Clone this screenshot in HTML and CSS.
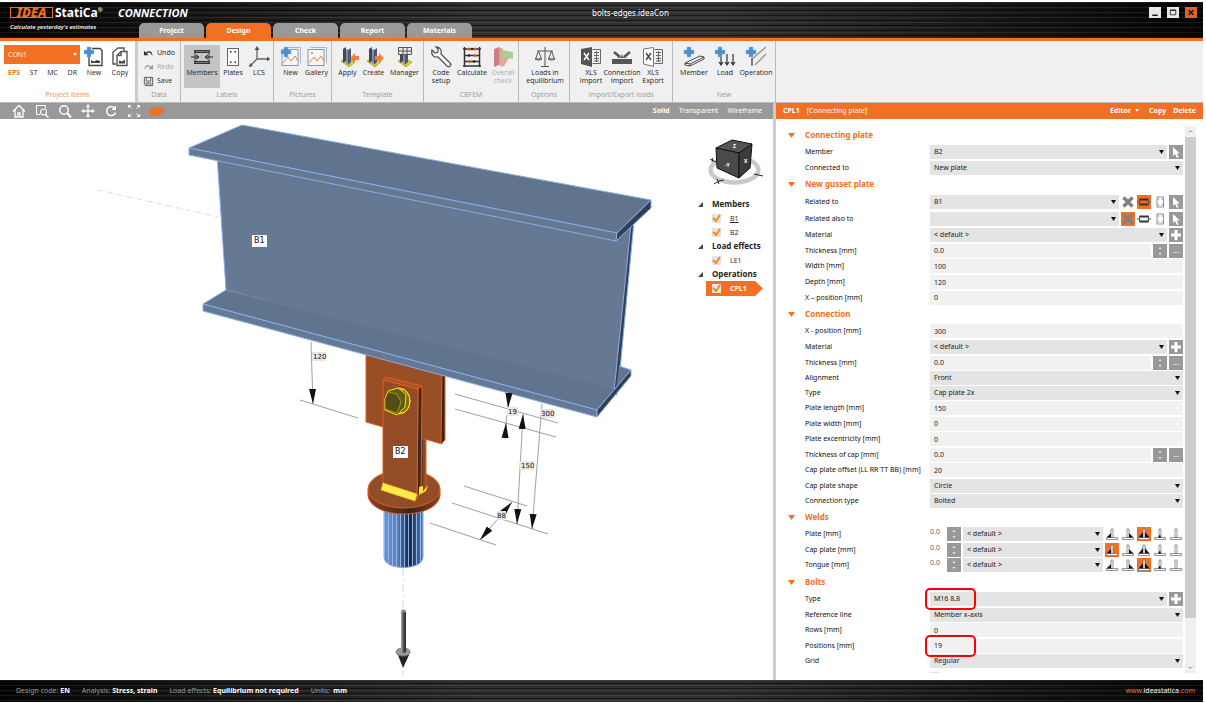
FILE: index.html
```
<!DOCTYPE html>
<html lang="en">

<head>
    <meta charset="UTF-8" />
    <meta name="viewport" content="width=device-width, initial-scale=1.0" />
    <title>IDEA StatiCa Connection - bolts-edges.ideaCon</title>
    <link rel="stylesheet" href="styles.css">
</head>

<body>

    <!-- shared icons -->
    <svg class="sprite" aria-hidden="true">
        <symbol id="plus" viewBox="0 0 14 14"><path d="M5.500 2h3v3.500h3.500v3H8.500V12h-3V8.500H2v-3h3.500z" fill="#fff" /></symbol>
        <symbol id="pick" viewBox="0 0 14 14"><path d="M4 2v9l2-2 2 4 1.500-.8L7.800 8.500h3z" fill="#fff" /></symbol>
        <symbol id="spin" viewBox="0 0 14 14"><path d="M5.500 5L7 3l1.500 2zM5.500 9L7 11l1.500-2z" fill="#eee" /></symbol>
        <symbol id="cross" viewBox="0 0 14 14"><path d="M2.500 2.500l9 9M11.500 2.500l-9 9" stroke="#808080" stroke-width="3.500" /></symbol>
        <symbol id="beam" viewBox="0 0 14 14"><path d="M2.500 4.500h9M2.500 9.500h9" stroke="#333" stroke-width="1.800" /><path d="M0 7h3.500M10.500 7H14M2.500 4v6M11.500 4v6" stroke="#555" /></symbol>
        <symbol id="plate" viewBox="0 0 14 14"><rect x="4" y="2" width="6.500" height="10" fill="#fff" stroke="#777" stroke-width=".8" /><path d="M5.500 3.500v1M9 3.500v1M5.500 9.500v1M9 9.500v1" stroke="#555" /></symbol>
        <symbol id="weld-base" viewBox="0 0 14 14"><path d="M1.500 10.500h11v2h-11zM6 2h2v8.500H6z" fill="#fff" stroke="#777" stroke-width=".8" /></symbol>
        <symbol id="weld-left" viewBox="0 0 14 14"><use href="#weld-base" /><path d="M6 6v4.500H1.500z" fill="#111" /></symbol>
        <symbol id="weld-right" viewBox="0 0 14 14"><use href="#weld-base" /><path d="M8 6v4.500h4.500z" fill="#111" /></symbol>
        <symbol id="weld-both" viewBox="0 0 14 14"><use href="#weld-base" /><path d="M6 5v5.500H1.500zM8 5v5.500h4.500z" fill="#111" /></symbol>
        <symbol id="weld-butt" viewBox="0 0 14 14"><use href="#weld-base" /><path d="M5 10.500l2-3 1 3z" fill="#111" /></symbol>
        <symbol id="blueplus" viewBox="0 0 22 22"><path d="M4 1h4v3h3v4H8v3H4V8H1V4h3z" fill="#4a90d0" stroke="#8bb8e4" stroke-width=".5" /></symbol>
        <symbol id="column" viewBox="0 0 22 22">
            <path d="M4 15l6-3 8 4-6 5z" fill="#d8d02c" stroke="#8d8718" stroke-width=".6" />
            <path d="M6 3l3-2v14l-3 2z" fill="#40465c" /><path d="M9 4l2-1v14l-2 1z" fill="#8289a8" /><path d="M11 4l3-2v14l-3 3z" fill="#50566f" />
        </symbol>
        <symbol id="picture" viewBox="0 0 22 22">
            <path d="M4.500 1.500h16v16" fill="none" stroke="#aab6c4" />
            <rect x="2" y="3.500" width="16" height="16" fill="#f6f6f6" stroke="#7f9ab5" />
            <path d="M3 17l5-6 3 4 4-5 3 5" fill="none" stroke="#e8853c" />
        </symbol>
    </svg>

    <header class="titlebar">
        <div class="titlebar-row">
            <div class="brand"><b class="brand-idea">IDEA</b><b class="brand-name">StatiCa<sup>®</sup></b><b class="brand-product">CONNECTION</b></div>
            <div class="file-name">bolts-edges.ideaCon</div>
            <div class="window-buttons">
                <button aria-label="Minimize"><svg viewBox="0 0 12 12"><path d="M3 9h6" stroke="#111" stroke-width="1.500" /></svg></button>
                <button aria-label="Maximize"><svg viewBox="0 0 12 12"><path d="M3 3.500h6v5H3z" fill="none" stroke="#333" /><path d="M3 3.500h6" stroke="#333" stroke-width="1.500" /></svg></button>
                <button class="close" aria-label="Close"><svg viewBox="0 0 12 12"><path d="M3.500 3.500l5 5M8.500 3.500l-5 5" stroke="#111" stroke-width="1.600" /></svg></button>
            </div>
        </div>
        <div class="titlebar-row">
            <div class="slogan">Calculate yesterday's estimates</div>
            <nav class="tabs">
                <button>Project</button>
                <button class="active">Design</button>
                <button>Check</button>
                <button>Report</button>
                <button>Materials</button>
            </nav>
        </div>
    </header>

    <div class="ribbon">
        <section class="group project">
            <div class="tools">
                <div class="project-pick">
                    <select aria-label="Project item"><option>CON1</option></select>
                    <div class="modes"><button class="on">EPS</button><button>ST</button><button>MC</button><button>DR</button></div>
                </div>
                <button class="tool"><svg viewBox="0 0 22 22"><path d="M9 2.500h8l2 2v15H6V11" fill="#fff" stroke="#444" stroke-width="1.400" /><path d="M8 17v-3l3 1.500 3-1.500 3 1v2z" fill="#444" /><use href="#blueplus" width="22" height="22" /></svg>New</button>
                <button class="tool"><svg viewBox="0 0 22 22"><path d="M7 18H4V6l5-4h6v4" fill="none" stroke="#555" stroke-width="1.400" /><path d="M8 9.500l4-4h6v14H8zM12 5.500v4H8" fill="#fff" stroke="#555" stroke-width="1.400" /><path d="M10 17.500v-3l3 1 3-2v4z" fill="#444" /></svg>Copy</button>
            </div>
            <h2>Project items</h2>
        </section>
        <section class="group">
            <div class="lines">
                <button><svg viewBox="0 0 12 12"><path d="M1 3v5h5L4 6c3-2 5-1 6 3 1-5-3-7-7-4z" fill="#333" /></svg>Undo</button>
                <button class="dim"><svg viewBox="0 0 12 12"><path d="M11 3v5H6l2-2C5 4 3 5 2 9 1 4 5 2 9 5z" fill="#999" /></svg>Redo</button>
                <button><svg viewBox="0 0 12 12"><path d="M1.500 1.500h9v9h-8l-1-1z" fill="none" stroke="#555" /><path d="M3.500 1.500v4h5v-4M3.500 10.500v-3h5v3M5.500 8v2" fill="none" stroke="#555" /></svg>Save</button>
            </div>
            <h2>Data</h2>
        </section>
        <section class="group">
            <div class="tools">
                <button class="tool wide pressed"><svg viewBox="0 0 22 22"><path d="M3 5.500h16M3 16.500h16" stroke="#333" stroke-width="3" /><path d="M3 5.500h16M3 16.500h16" stroke="#999" stroke-width=".7" /><path d="M4 5v12M18 5v12" stroke="#444" /><path d="M0 11h7M15 11h7M5 9l3 2-3 2M17 9l-3 2 3 2" fill="none" stroke="#222" /></svg>Members</button>
                <button class="tool"><svg viewBox="0 0 22 22"><rect x="5.500" y="2.500" width="11" height="17" fill="#fff" stroke="#666" /><path d="M8 5h1.500v1.500H8zM12.500 5H14v1.500h-1.500zM8 15.500h1.500V17H8zM12.500 15.500H14V17h-1.500z" fill="#222" /></svg>Plates</button>
                <button class="tool"><svg viewBox="0 0 22 22"><path d="M9 13V2M9 13h12M9 13l-7 7" fill="none" stroke="#666" stroke-width="1.300" /><path d="M6.500 4L9 0l2.500 4zM19 10.500l3.500 2.500-3.500 2.500zM1 21l1-4 3 3z" fill="#555" /></svg>LCS</button>
            </div>
            <h2>Labels</h2>
        </section>
        <section class="group">
            <div class="tools">
                <button class="tool"><svg viewBox="0 0 22 22"><use href="#picture" width="22" height="22" /><use href="#blueplus" width="22" height="22" /></svg>New</button>
                <button class="tool"><svg viewBox="0 0 22 22"><use href="#picture" width="22" height="22" /><circle cx="6" cy="7" r="1" fill="#e8853c" /></svg>Gallery</button>
            </div>
            <h2>Pictures</h2>
        </section>
        <section class="group">
            <div class="tools">
                <button class="tool"><svg viewBox="0 0 22 22"><use href="#column" width="22" height="22" /><path d="M22 10h-4V7l-5 5 5 5v-3h4z" fill="#f0803c" /></svg>Apply</button>
                <button class="tool"><svg viewBox="0 0 22 22"><use href="#column" width="22" height="22" /><path d="M12 10h4V7l5 5-5 5v-3h-4z" fill="#f0803c" /></svg>Create</button>
                <button class="tool wide"><svg viewBox="0 0 22 22"><use href="#column" width="22" height="22" /><path d="M4.500 1.500h13v7h-13zM4.500 5h13M9 1.500v7M13 1.500v7" fill="#e8eaf2" stroke="#555" /></svg>Manager</button>
            </div>
            <h2>Template</h2>
        </section>
        <section class="group">
            <div class="tools">
                <button class="tool"><svg viewBox="0 0 22 22"><path d="M2 4l3 3 3-1V3L6 1c4 0 6 3 5 7l9 9c2 2-1 5-3 3l-9-9C3 12 1 8 2 4z" fill="#fafafa" stroke="#555" stroke-width="1.300" /></svg>Code<br>setup</button>
                <button class="tool wide"><svg viewBox="0 0 22 22"><path d="M3.500 1v20M18.500 1v20M2 3h18M3 9.500h16M3 15.500h16M2 20h18" stroke="#333" stroke-width="1.500" /><g fill="#e4570e"><circle cx="8" cy="3" r="1.500" /><circle cx="14" cy="3" r="1.500" /><circle cx="14" cy="9.500" r="1.500" /><circle cx="9" cy="15.500" r="1.500" /></g><g fill="#222"><circle cx="11" cy="3" r="1.300" /><circle cx="8" cy="9.500" r="1.300" /><circle cx="13" cy="15.500" r="1.300" /></g></svg>Calculate</button>
                <button class="tool dim"><svg viewBox="0 0 22 22"><path d="M2 3l5-2v18l-5 2z" fill="#cd7f83" /><path d="M7 1l4 2v17l-4-1z" fill="#df9d9d" /><path d="M9 4l12 2v7L9 11z" fill="#a9ce96" /><path d="M9 11l8 1-5 8-3 1z" fill="#e2a999" /></svg>Overall<br>check</button>
            </div>
            <h2>CBFEM</h2>
        </section>
        <section class="group">
            <div class="tools">
                <button class="tool wide"><svg viewBox="0 0 22 22"><path d="M11 1v19M7 20.500h8M3 5h16M4.500 5L1.500 13h6zM17.500 5l-3 8h6z" fill="none" stroke="#555" /><path d="M1 13h7q-3.500 3-7 0zM14 13h7q-3.500 3-7 0z" fill="#aaa" stroke="#555" stroke-width=".6" /></svg>Loads in<br>equilibrium</button>
            </div>
            <h2>Options</h2>
        </section>
        <section class="group">
            <div class="tools">
                <button class="tool"><svg viewBox="0 0 22 22"><path d="M12.500 3.500h8v14h-8M14 6.500h5M14 9.500h5M14 12.500h5M14 15h5M16.500 5v11" fill="none" stroke="#666" /><path d="M1 3l11-2v20L1 18z" fill="#555" /><path d="M4 7l5 7M9 7l-5 7" stroke="#fff" stroke-width="1.400" /></svg>XLS<br>Import</button>
                <button class="tool wide"><svg viewBox="0 0 22 22"><path d="M1 13h20v5H1z" fill="#555" /><path d="M3 6l6 5M19 6l-6 5" stroke="#555" stroke-width="2.500" /><path d="M5 12l5-1V8l1 3 1-3v3l5 1z" fill="#555" /></svg>Connection<br>Import</button>
                <button class="tool"><svg viewBox="0 0 22 22"><path d="M12.500 3.500h8v14h-8M14 6.500h5M14 9.500h5M14 12.500h5M14 15h5M16.500 5v11" fill="none" stroke="#666" /><path d="M1.500 3l10-1.500v19L1.500 18z" fill="#fff" stroke="#777" /><path d="M4 7l5 7M9 7l-5 7" stroke="#444" stroke-width="1.400" /></svg>XLS<br>Export</button>
            </div>
            <h2>Import/Export loads</h2>
        </section>
        <section class="group">
            <div class="tools">
                <button class="tool wide"><svg viewBox="0 0 22 22"><path d="M2 17l15-7 4 1v2L7 20l-5-1zM2 17l5 1 14-7M7 18v2" fill="#fff" stroke="#444" /><use href="#blueplus" width="22" height="22" /></svg>Member</button>
                <button class="tool"><svg viewBox="0 0 22 22"><path d="M7 9v10M13 8v11M19 8v11M5 16l2 3 2-3M11 16l2 3 2-3M17 16l2 3 2-3" fill="none" stroke="#333" stroke-width="1.200" /><use href="#blueplus" width="22" height="22" /></svg>Load</button>
                <button class="tool wide"><svg viewBox="0 0 22 22"><path d="M21 1L7 13v6M21 8L10 19" fill="none" stroke="#999" stroke-width="1.500" /><path d="M7 12v8" stroke="#444" /><use href="#blueplus" width="22" height="22" /></svg>Operation</button>
            </div>
            <h2>New</h2>
        </section>
    </div>

    <main class="workspace">
        <section class="view">
            <div class="view-bar">
                <div class="view-tools">
                    <button aria-label="Home"><svg viewBox="0 0 14 14"><path d="M1 7.500L7 1.500l6 6M3 6v7h3V9h2v4h3V6" fill="none" stroke="#fff" stroke-width="1.300" /></svg></button>
                    <button aria-label="Zoom window"><svg viewBox="0 0 14 14"><path d="M5 10.500H1.500v-9h9V4" fill="none" stroke="#fff" /><circle cx="8.500" cy="8" r="3" fill="none" stroke="#fff" stroke-width="1.200" /><path d="M10.500 10.500l3 3" stroke="#fff" stroke-width="1.500" /></svg></button>
                    <button aria-label="Zoom"><svg viewBox="0 0 14 14"><circle cx="6" cy="6" r="4.300" fill="none" stroke="#fff" stroke-width="1.500" /><path d="M9 9l4 4.500" stroke="#fff" stroke-width="2" /></svg></button>
                    <button aria-label="Pan"><svg viewBox="0 0 14 14"><path d="M7 2v10M2 7h10" stroke="#fff" stroke-width="1.300" /><path d="M5 3L7 0l2 3zM5 11l2 3 2-3zM3 5L0 7l3 2zM11 5l3 2-3 2z" fill="#fff" /></svg></button>
                    <button aria-label="Rotate"><svg viewBox="0 0 14 14"><path d="M10.500 4A4.500 4.500 0 1 0 11.500 8.500" fill="none" stroke="#fff" stroke-width="1.500" /><path d="M12 1.500v4.500H7.500z" fill="#fff" /></svg></button>
                    <button aria-label="Fit"><svg viewBox="0 0 14 14"><path d="M1.500 4V1.500H4M10 1.500h2.500V4M12.500 10v2.500H10M4 12.500H1.500V10M2 2l2.500 2.500M12 2L9.500 4.500M12 12L9.500 9.500M2 12l2.500-2.500" fill="none" stroke="#fff" /></svg></button>
                    <button aria-label="Perspective"><svg viewBox="0 0 14 14"><path d="M0 6l4-3 10 1v3l-4 4-7 1-3-2z" fill="#f36f21" /></svg></button>
                </div>
                <div class="view-modes"><button class="on">Solid</button><button>Transparent</button><button>Wireframe</button></div>
            </div>

            <div class="scene">
                <svg class="model" viewBox="0 119 773 560" preserveAspectRatio="xMinYMin meet">
                    <defs>
                        <linearGradient id="pipe" x1="0" x2="1"><stop offset="0" stop-color="#7394c8" /><stop offset=".35" stop-color="#5f7fae" /><stop offset=".65" stop-color="#1b2433" /><stop offset="1" stop-color="#5c7cab" /></linearGradient>
                        <linearGradient id="rod" x1="0" x2="1"><stop offset="0" stop-color="#aaa" /><stop offset=".5" stop-color="#555" /><stop offset="1" stop-color="#222" /></linearGradient>
                        <linearGradient id="rim" x1="0" x2="1"><stop offset="0" stop-color="#8a4522" /><stop offset=".6" stop-color="#3c2216" /><stop offset="1" stop-color="#8a4522" /></linearGradient>
                        <pattern id="ribs" width="4" height="10" patternUnits="userSpaceOnUse"><path d="M.5 0v10" stroke="#8db5f4" /></pattern>
                        <marker id="tip" viewBox="0 0 15 8" refX="15" refY="4" markerWidth="15" markerHeight="8" markerUnits="userSpaceOnUse" orient="auto-start-reverse"><path d="M0 .5L15 4 0 7.500z" fill="#111" /></marker>
                    </defs>
                    <path d="M98 190l120 27" stroke="#a9c4e4" stroke-width=".6" stroke-dasharray="5 2 1 2" />

                    <!-- pipe under the cap plate -->
                    <path d="M384 500h39v57c0 14-39 14-39 0z" fill="url(#pipe)" />
                    <path d="M384 500h39v57c0 14-39 14-39 0z" fill="url(#ribs)" stroke="#7ba7ea" />
                    <path d="M368 489v7c4 24 68 24 72 0v-7z" fill="url(#rim)" stroke="#e55c1c" />
                    <ellipse cx="404" cy="489" rx="36" ry="19" fill="#914d27" stroke="#e55c1c" />

                    <!-- gusset and tongue plates -->
                    <g stroke="#e55c1c">
                        <path d="M421 430h5v60l-7 5z" fill="#8e4a25" />
                        <path d="M422 436v52" stroke="#39221a" />
                        <path d="M366 352l76 18v74l-76-22z" fill="#984f26" />
                        <path d="M442 370h3v70l-4 4z" fill="#3a241a" />
                        <path d="M383 380l3-3 36 9-4 3z" fill="#a85528" />
                        <path d="M418 389l4-3-1 106-4 5z" fill="#42261b" />
                        <path d="M383 380l35 9-1 110-34-14z" fill="#934c26" />
                    </g>
                    <path d="M383 483l34 11-2 7-34-11z" fill="#ffe94a" stroke="#f8c718" stroke-width=".6" />
                    <path d="M419 487l4-1v6l-4 3zM421 494l7-9-2 6z" fill="#ffe032" />
                    <ellipse cx="399" cy="401" rx="11" ry="13" fill="#7f6f12" stroke="#f5df0a" />
                    <ellipse cx="401" cy="401" rx="9" ry="12" fill="none" stroke="#f5df0a" />
                    <path d="M388 391l10-3 8 6-1 13-8 8-12-5v-11z" fill="#645b13" stroke="#f5df0a" />
                    <path d="M385 399l3-7 9 2 4 8-4 11-12-4z" fill="#514c18" stroke="#d9c70d" stroke-width=".6" />

                    <!-- beam B1 -->
                    <g stroke="#84aeea">
                        <path d="M217 155l416 60-16 180-391-105z" fill="#657993" />
                        <path d="M631 224l3-3-16 170-4 1z" fill="#334055" />
                        <path d="M226 290l-23 14 394 106 34-40-12-4-3 24z" fill="#60758d" stroke="none" />
                        <path d="M226 290l-23 14 394 106 34-40-12-4" fill="none" />
                        <path d="M203 304l394 106v7L203 311z" fill="#657993" />
                        <path d="M597 410l34-40v6l-34 41z" fill="#333f50" />
                        <path d="M189 148l53-23 409 75-34 33z" fill="#60758d" />
                        <path d="M189 148l428 85-1 8-427-86z" fill="#657993" />
                        <path d="M617 233l34-33v8l-35 33z" fill="#333f50" />
                    </g>

                    <!-- dimensions -->
                    <g fill="none" stroke="#777" stroke-width=".7">
                        <path d="M300 400l58 18M455 394l103 29M455 409l101 28M464 486l63 20M452 503l96 31M430 523l66 22" />
                        <path d="M311 342l2 62" marker-end="url(#tip)" />
                        <path d="M509 393l-1 15" marker-end="url(#tip)" />
                        <path d="M508 408l-2 15" />
                        <path d="M505 439l1-16" marker-end="url(#tip)" />
                        <path d="M542 404l-10 125" marker-end="url(#tip)" />
                        <path d="M523 414l-6 110" marker-start="url(#tip)" marker-end="url(#tip)" />
                        <path d="M512 502l-32 38" marker-start="url(#tip)" marker-end="url(#tip)" />
                    </g>
                    <g fill="#e6e6e6">
                        <rect x="312" y="352" width="14" height="9" /><rect x="507" y="407" width="11" height="9" /><rect x="541" y="409" width="14" height="9" />
                        <rect x="520" y="461" width="14" height="9" /><rect x="497" y="511" width="9" height="9" />
                    </g>
                    <g class="dims">
                        <text x="313" y="359">120</text><text x="508" y="414">19</text><text x="541" y="416">300</text><text x="521" y="468">150</text><text x="497" y="518">88</text>
                    </g>
                    <path d="M252 235h15v12h-15zM393 446h15v12h-15z" fill="#fff" />
                    <g class="names"><text x="254" y="243">B1</text><text x="395" y="454">B2</text></g>

                    <!-- load arrow -->
                    <path d="M403 568v42M403 670v6" stroke="#b5cbe4" stroke-width=".7" stroke-dasharray="8 3 2 3" />
                    <path d="M398 655h11l-6 13z" fill="#222" />
                    <ellipse cx="403" cy="652" rx="7" ry="4" fill="#999" stroke="#777" />
                    <path d="M401 612h5v40q-2.500 2-5 0z" fill="url(#rod)" />
                    <ellipse cx="403.500" cy="611" rx="2.500" ry="1.500" fill="#888" />
                </svg>

                <aside class="overlay">
                    <svg class="cube" viewBox="697 133 76 60">
                        <ellipse cx="734.500" cy="170" rx="24" ry="12.500" fill="none" stroke="#c9c9c9" stroke-width="4.500" />
                        <path d="M716 148l16-8 20 4-13 9z" fill="#555" stroke="#111" />
                        <path d="M716 148l23 5v25l-22-10z" fill="#4a4a4a" stroke="#111" />
                        <path d="M739 153l13-9-2 24-11 10z" fill="#3c3c3c" stroke="#111" />
                        <path d="M710 159l6 3M713 158l-1 4M714 184l5-3 5-1M717 179l2 5M754 174l9 2" stroke="#222" fill="none" />
                        <g class="cube-text"><text x="725" y="167">-Y</text><text x="744" y="163">X</text><text x="733" y="148">Z</text></g>
                    </svg>
                    <ul class="tree">
                        <li class="branch">Members</li>
                        <li><label><input type="checkbox" checked><u>B1</u></label></li>
                        <li><label><input type="checkbox" checked>B2</label></li>
                        <li class="branch">Load effects</li>
                        <li><label><input type="checkbox" checked>LE1</label></li>
                        <li class="branch">Operations</li>
                        <li class="selected"><label><input type="checkbox" checked>CPL1</label></li>
                    </ul>
                </aside>
            </div>
        </section>

        <section class="panel">
            <div class="panel-bar">
                <b>CPL1</b><span>[Connecting plate]</span>
                <div class="panel-actions"><button class="editor">Editor</button><button>Copy</button><button>Delete</button></div>
            </div>
            <div class="panel-body">
                <form class="props">
                    <h3>Connecting plate</h3>
                    <div class="row tall"><label for="member">Member</label><div class="field"><select id="member"><option>B2</option></select><button type="button" class="sq" aria-label="Pick"><svg><use href="#pick" /></svg></button></div></div>
                    <div class="row"><label for="connected">Connected to</label><div class="field"><select id="connected"><option>New plate</option></select></div></div>

                    <h3>New gusset plate</h3>
                    <div class="row high"><label for="related">Related to</label><div class="field"><select id="related"><option>B1</option></select><div class="picks"><button type="button" aria-label="None"><svg><use href="#cross" /></svg></button><button type="button" class="on" aria-label="Member"><svg><use href="#beam" /></svg></button><button type="button" aria-label="Plate"><svg><use href="#plate" /></svg></button></div><button type="button" class="sq" aria-label="Pick"><svg><use href="#pick" /></svg></button></div></div>
                    <div class="row high"><label for="related2">Related also to</label><div class="field"><select id="related2"><option></option></select><div class="picks"><button type="button" class="on" aria-label="None"><svg><use href="#cross" /></svg></button><button type="button" aria-label="Member"><svg><use href="#beam" /></svg></button><button type="button" aria-label="Plate"><svg><use href="#plate" /></svg></button></div><button type="button" class="sq" aria-label="Pick"><svg><use href="#pick" /></svg></button></div></div>
                    <div class="row tall"><label for="material">Material</label><div class="field"><select id="material"><option>&lt; default &gt;</option></select><button type="button" class="sq" aria-label="Add"><svg><use href="#plus" /></svg></button></div></div>
                    <div class="row"><label for="thickness">Thickness [mm]</label><div class="field"><input id="thickness" value="0.0"><button type="button" class="sq" aria-label="Step"><svg><use href="#spin" /></svg></button><button type="button" class="sq">...</button></div></div>
                    <div class="row tall"><label for="width">Width [mm]</label><div class="field"><input id="width" value="100"></div></div>
                    <div class="row tall"><label for="depth">Depth [mm]</label><div class="field"><input id="depth" value="120"></div></div>
                    <div class="row"><label for="xpos">X – position [mm]</label><div class="field"><input id="xpos" value="0"></div></div>

                    <h3>Connection</h3>
                    <div class="row tall"><label for="xpos2">X - position [mm]</label><div class="field"><input id="xpos2" value="300"></div></div>
                    <div class="row tall"><label for="material2">Material</label><div class="field"><select id="material2"><option>&lt; default &gt;</option></select><button type="button" class="sq" aria-label="Add"><svg><use href="#plus" /></svg></button></div></div>
                    <div class="row"><label for="thickness2">Thickness [mm]</label><div class="field"><input id="thickness2" value="0.0"><button type="button" class="sq" aria-label="Step"><svg><use href="#spin" /></svg></button><button type="button" class="sq">...</button></div></div>
                    <div class="row"><label for="alignment">Alignment</label><div class="field"><select id="alignment"><option>Front</option></select></div></div>
                    <div class="row"><label for="type">Type</label><div class="field"><select id="type"><option>Cap plate 2x</option></select></div></div>
                    <div class="row tall"><label for="plength">Plate length [mm]</label><div class="field"><input id="plength" value="150"></div></div>
                    <div class="row"><label for="pwidth">Plate width [mm]</label><div class="field"><input id="pwidth" value="0"></div></div>
                    <div class="row tall"><label for="pexc">Plate excentricity [mm]</label><div class="field"><input id="pexc" value="0"></div></div>
                    <div class="row"><label for="cap">Thickness of cap [mm]</label><div class="field"><input id="cap" value="0.0"><button type="button" class="sq" aria-label="Step"><svg><use href="#spin" /></svg></button><button type="button" class="sq">...</button></div></div>
                    <div class="row tall"><label for="offset">Cap plate offset (LL RR TT BB) [mm]</label><div class="field"><input id="offset" value="20"></div></div>
                    <div class="row"><label for="shape">Cap plate shape</label><div class="field"><select id="shape"><option>Circle</option></select></div></div>
                    <div class="row"><label for="contype">Connection type</label><div class="field"><select id="contype"><option>Bolted</option></select></div></div>

                    <h3>Welds</h3>
                    <div class="row tall"><label for="w1">Plate [mm]</label><div class="field weld"><span>0.0</span><button type="button" class="sq" aria-label="Step"><svg><use href="#spin" /></svg></button><select id="w1"><option>&lt; default &gt;</option></select><div class="picks"><button type="button" aria-label="Left"><svg><use href="#weld-left" /></svg></button><button type="button" aria-label="Right"><svg><use href="#weld-right" /></svg></button><button type="button" class="on" aria-label="Both"><svg><use href="#weld-both" /></svg></button><button type="button" aria-label="Butt"><svg><use href="#weld-butt" /></svg></button><button type="button" aria-label="None"><svg><use href="#weld-base" /></svg></button></div></div></div>
                    <div class="row"><label for="w2">Cap plate [mm]</label><div class="field weld"><span>0.0</span><button type="button" class="sq" aria-label="Step"><svg><use href="#spin" /></svg></button><select id="w2"><option>&lt; default &gt;</option></select><div class="picks"><button type="button" class="on" aria-label="Left"><svg><use href="#weld-left" /></svg></button><button type="button" aria-label="Right"><svg><use href="#weld-right" /></svg></button><button type="button" aria-label="Both"><svg><use href="#weld-both" /></svg></button><button type="button" aria-label="Butt"><svg><use href="#weld-butt" /></svg></button><button type="button" aria-label="None"><svg><use href="#weld-base" /></svg></button></div></div></div>
                    <div class="row tall"><label for="w3">Tongue [mm]</label><div class="field weld"><span>0.0</span><button type="button" class="sq" aria-label="Step"><svg><use href="#spin" /></svg></button><select id="w3"><option>&lt; default &gt;</option></select><div class="picks"><button type="button" aria-label="Left"><svg><use href="#weld-left" /></svg></button><button type="button" aria-label="Right"><svg><use href="#weld-right" /></svg></button><button type="button" class="on" aria-label="Both"><svg><use href="#weld-both" /></svg></button><button type="button" aria-label="Butt"><svg><use href="#weld-butt" /></svg></button><button type="button" aria-label="None"><svg><use href="#weld-base" /></svg></button></div></div></div>

                    <h3>Bolts</h3>
                    <div class="row tall"><label for="bolt">Type</label><div class="field marked"><select id="bolt"><option>M16 8.8</option></select><button type="button" class="sq" aria-label="Add"><svg><use href="#plus" /></svg></button></div></div>
                    <div class="row"><label for="refline">Reference line</label><div class="field"><select id="refline"><option>Member x-axis</option></select></div></div>
                    <div class="row tall"><label for="rows">Rows [mm]</label><div class="field"><input id="rows" value="0"></div></div>
                    <div class="row"><label for="positions">Positions [mm]</label><div class="field marked"><input id="positions" value="19"></div></div>
                    <div class="row"><label for="grid">Grid</label><div class="field"><select id="grid"><option>Regular</option></select></div></div>
                    <div class="row tall"><label for="shear">Shear plane in thread</label><div class="field"><input type="checkbox" id="shear" checked></div></div>
                </form>
                <div class="scrollbar"><svg viewBox="0 0 11 11"><path d="M3.500 6.500l2-2 2 2" fill="none" stroke="#888" /></svg><div class="thumb"></div><svg viewBox="0 0 11 11"><path d="M3.500 4.500l2 2 2-2" fill="none" stroke="#888" /></svg></div>
            </div>
        </section>
    </main>

    <footer class="status">
        <span>Design code: <b>EN</b></span>
        <span>Analysis: <b>Stress, strain</b></span>
        <span>Load effects: <b>Equilibrium not required</b></span>
        <span>Units: &nbsp;<b>mm</b></span>
        <a href="#"><i>www.</i>ideastatica<i>.com</i></a>
    </footer>

</body>

</html>
```
FILE: styles.css
```
*,
*::after {
    box-sizing: border-box;
}

body {
    margin: 0;
    padding: 2px 3px 1px 0;
    height: 100vh;
    display: flex;
    flex-direction: column;
    font-family: "Noto Sans", "Open Sans", sans-serif;
    font-size: 7px;
    line-height: 10px;
    color: #222;
    background: #fff;
}

button,
select,
input {
    font: inherit;
    color: inherit;
    margin: 0;
    padding: 0;
    border: 0;
    border-radius: 0;
    background: none;
}

.sprite {
    display: none;
}

/* title bar */

.titlebar,
.status {
    background:
        repeating-linear-gradient(rgba(255, 255, 255, 0.07) 0 1px, transparent 1px 3px, rgba(0, 0, 0, 0.5) 3px 4px, transparent 4px 5px),
        linear-gradient(90deg, #050505, #303030 40%, #303030 60%, #050505);
    color: #fff;
}

.titlebar {
    height: 39px;
    border-bottom: 3px solid #f36f21;
}

.titlebar-row {
    display: flex;
    height: 21px;
    align-items: center;
}

.titlebar-row + .titlebar-row {
    height: 15px;
    align-items: stretch;
}

.brand {
    display: flex;
    align-items: center;
    width: 190px;
    padding-left: 10px;
    white-space: nowrap;
}

.brand-idea {
    width: 43px;
    border: 1px solid #f36f21;
    color: #f36f21;
    font-size: 13px;
    line-height: 9px;
    font-weight: 800;
    font-style: italic;
    text-align: center;
}

.brand-name {
    width: 65px;
    padding-left: 2px;
    font-size: 12px;
}

.brand-name sup {
    font-size: 6px;
    line-height: 1px;
}

.brand-product {
    font-family: "Open Sans", sans-serif;
    font-size: 11px;
    font-style: italic;
}

.file-name {
    flex: 1;
    padding-right: 78px;
    text-align: center;
    font-size: 8px;
}

.window-buttons {
    display: flex;
    gap: 6px;
    padding-right: 6px;
}

.window-buttons button {
    width: 12px;
    height: 11px;
    background: #e8e8e8;
}

.window-buttons .close {
    background: #e0641f;
}

.window-buttons svg {
    display: block;
    width: 12px;
    height: 11px;
}

.slogan {
    width: 139px;
    padding-left: 10px;
    line-height: 8px;
    font-family: "Open Sans", sans-serif;
    font-size: 6px;
    font-style: italic;
    font-weight: 600;
}

.tabs {
    display: flex;
    gap: 2px;
}

.tabs button {
    width: 65px;
    border-radius: 5px 5px 0 0;
    background: #999;
    color: #fff;
    font-weight: 700;
}

.tabs .active {
    background: #f36f21;
}

/* ribbon */

.ribbon {
    display: grid;
    grid-template-columns: 138px 43px 93px 58px 92px 95px 51px 103px 103px;
    height: 62px;
    background: #f0f0f0;
    border-bottom: 1px solid #bbb;
    font-family: "Open Sans", sans-serif;
}

.group {
    display: flex;
    flex-direction: column;
    justify-content: space-between;
    padding: 4px 0 2px;
    border-right: 1px solid #bbb;
}

.group h2 {
    margin: 0;
    font-size: 7px;
    font-weight: 400;
    line-height: 10px;
    text-align: center;
    color: #999;
}

.project {
    background: #fff;
    border-right: 3px solid #ccc;
}

.project h2 {
    color: #f5a878;
    font-weight: 600;
}

.tools {
    display: flex;
    justify-content: center;
    padding-left: 2px;
}

.tool {
    display: flex;
    flex-direction: column;
    align-items: center;
    width: 26px;
    height: 43px;
    padding-top: 1px;
    line-height: 8px;
}

.tool svg {
    flex: none;
    width: 22px;
    height: 22px;
    margin-bottom: 1px;
}

.wide {
    width: 36px;
}

.pressed {
    background: #c4c4c4;
}

.dim {
    color: #aaa;
}

.project-pick {
    width: 77px;
}

.project-pick select {
    appearance: none;
    width: 76px;
    height: 19px;
    padding-left: 4px;
    color: #fff;
    background: #f36f21 url("data:image/svg+xml,%3Csvg xmlns='http://www.w3.org/2000/svg' width='5' height='4'%3E%3Cpath d='M0 0h4L2 3z' fill='white'/%3E%3C/svg%3E") no-repeat right 2px center;
}

.modes {
    display: flex;
    justify-content: space-between;
    padding: 4px 4px 0;
}

.modes .on {
    color: #f36f21;
    font-weight: 700;
}

.lines {
    display: flex;
    flex-direction: column;
    padding: 1px 0 0 5px;
}

.lines button {
    display: flex;
    align-items: center;
    gap: 3px;
    height: 14px;
}

.lines svg {
    width: 11px;
    height: 11px;
}

/* workspace */

.workspace {
    flex: 1;
    min-height: 0;
    display: grid;
    grid-template-columns: minmax(0, 1fr) 430px;
}

.view {
    display: flex;
    flex-direction: column;
}

.view-bar {
    display: flex;
    justify-content: space-between;
    height: 16px;
    padding: 0 11px 0 7px;
    background: #999;
    color: #fff;
}

.view-tools,
.view-modes {
    display: flex;
    align-items: center;
}

.view-tools button {
    width: 23px;
    height: 14px;
}

.view-tools svg {
    width: 14px;
    height: 14px;
}

.view-modes {
    gap: 9px;
}

.view-modes .on {
    font-weight: 700;
}

.scene {
    flex: 1;
    min-height: 0;
    position: relative;
}

.model {
    display: block;
    width: 100%;
    height: 100%;
}

.model text {
    font-family: "DejaVu Sans", sans-serif;
    fill: #111;
}

.dims {
    font-size: 7px;
}

.names {
    font-size: 8px;
}

.overlay {
    position: absolute;
    top: 14px;
    right: 0;
    width: 76px;
}

.cube {
    display: block;
    width: 76px;
    height: 60px;
}

.cube-text {
    font-size: 5px;
    font-weight: 700;
    fill: #fff;
}

.tree {
    list-style: none;
    margin: 0;
    padding: 4px 0 0;
    line-height: 14px;
    font-family: "Open Sans", sans-serif;
    font-size: 8px;
}

.tree li {
    padding-left: 15px;
    height: 14px;
}

.tree .branch {
    font-weight: 700;
    background: url("data:image/svg+xml,%3Csvg xmlns='http://www.w3.org/2000/svg' width='5' height='5'%3E%3Cpath d='M5 0v5H0z' fill='%23444'/%3E%3C/svg%3E") no-repeat 1px center;
}

.tree label {
    display: flex;
    align-items: center;
    gap: 9px;
    font-size: 7px;
    line-height: 15px;
}

input[type="checkbox"] {
    appearance: none;
    flex: none;
    width: 9px;
    height: 9px;
    background: #e4e4e4 url("data:image/svg+xml,%3Csvg xmlns='http://www.w3.org/2000/svg' width='9' height='9'%3E%3Cpath d='M1 4l3 3 4-6' fill='none' stroke='%23f78b1e' stroke-width='2'/%3E%3C/svg%3E");
}

.tree .selected {
    width: 57px;
    height: 15px;
    margin-left: 9px;
    padding-left: 6px;
    color: #fff;
    background: #f36f21;
    clip-path: polygon(0 0, 86% 0, 100% 50%, 86% 100%, 0 100%);
}

.selected label {
    font-weight: 700;
}

/* properties */

.panel {
    display: flex;
    flex-direction: column;
    min-height: 0;
    border-left: 3px solid #ccc;
}

.panel-bar {
    display: flex;
    align-items: center;
    flex: none;
    gap: 7px;
    height: 16px;
    padding: 0 7px;
    background: #f36f21;
    color: #fff;
}

.panel-actions {
    display: flex;
    gap: 7px;
    margin-left: auto;
    font-weight: 700;
}

.editor {
    padding-right: 11px;
    background: url("data:image/svg+xml,%3Csvg xmlns='http://www.w3.org/2000/svg' width='5' height='4'%3E%3Cpath d='M0 0h4L2 3z' fill='white'/%3E%3C/svg%3E") no-repeat right 2px center;
}

.panel-body {
    display: flex;
    flex: 1;
    min-height: 0;
    gap: 2px;
    padding: 7px 7px 7px 11px;
}

.props {
    flex: 1;
    min-width: 0;
    overflow: hidden;
}

.props h3 {
    margin: 0;
    padding-left: 18px;
    font-size: 8px;
    line-height: 18px;
    color: #f36f21;
    background: url("data:image/svg+xml,%3Csvg xmlns='http://www.w3.org/2000/svg' width='7' height='5'%3E%3Cpath d='M0 0h7L3.500 5z' fill='%23f36f21'/%3E%3C/svg%3E") no-repeat 1px center;
}

.row {
    display: grid;
    grid-template-columns: 125px minmax(0, 1fr);
    height: 15px;
    padding-left: 18px;
    align-items: center;
}

.row.tall {
    height: 16px;
}

.row.high {
    height: 17px;
}

.row > label {
    white-space: nowrap;
    color: #111;
}

.field {
    position: relative;
    display: flex;
    align-items: center;
    gap: 2px;
    height: 14px;
}

.field select,
.field input:not([type="checkbox"]) {
    flex: 1;
    min-width: 0;
    height: 14px;
    padding: 0 4px;
    background: #f1f1f1;
}

.field select {
    appearance: none;
    background: #e4e4e4 url("data:image/svg+xml,%3Csvg xmlns='http://www.w3.org/2000/svg' width='5' height='4'%3E%3Cpath d='M0 0h5L2.500 4z' fill='%23111'/%3E%3C/svg%3E") no-repeat right 3px center;
}

.field svg {
    display: block;
    width: 14px;
    height: 14px;
}

.sq {
    flex: none;
    width: 14px;
    height: 14px;
    background: #999;
    color: #fff;
}

.picks {
    display: flex;
    gap: 2px;
}

.picks .on {
    background: #f36f21;
}

.weld span {
    width: 15px;
    align-self: flex-start;
    color: #666;
}

.marked::after {
    content: "";
    position: absolute;
    z-index: 1;
    top: -4px;
    left: -5px;
    width: 51px;
    height: 22px;
    border: 2px solid #f00;
    border-radius: 5px;
}

.scrollbar {
    display: flex;
    flex-direction: column;
    justify-content: space-between;
    width: 11px;
    background: #f0f0f0;
}

.scrollbar svg {
    flex: none;
    height: 11px;
}

.thumb {
    height: 88%;
    margin-bottom: auto;
    background: #cdcdcd;
}

/* status bar */

.status {
    display: flex;
    align-items: center;
    gap: 12px;
    height: 22px;
    padding: 0 8px 0 16px;
}

.status span {
    color: #999;
}

.status b {
    color: #fff;
}

.status a {
    margin-left: auto;
    color: #fff;
    text-decoration: none;
}

.status i {
    font-style: normal;
    color: #f36f21;
}
```
